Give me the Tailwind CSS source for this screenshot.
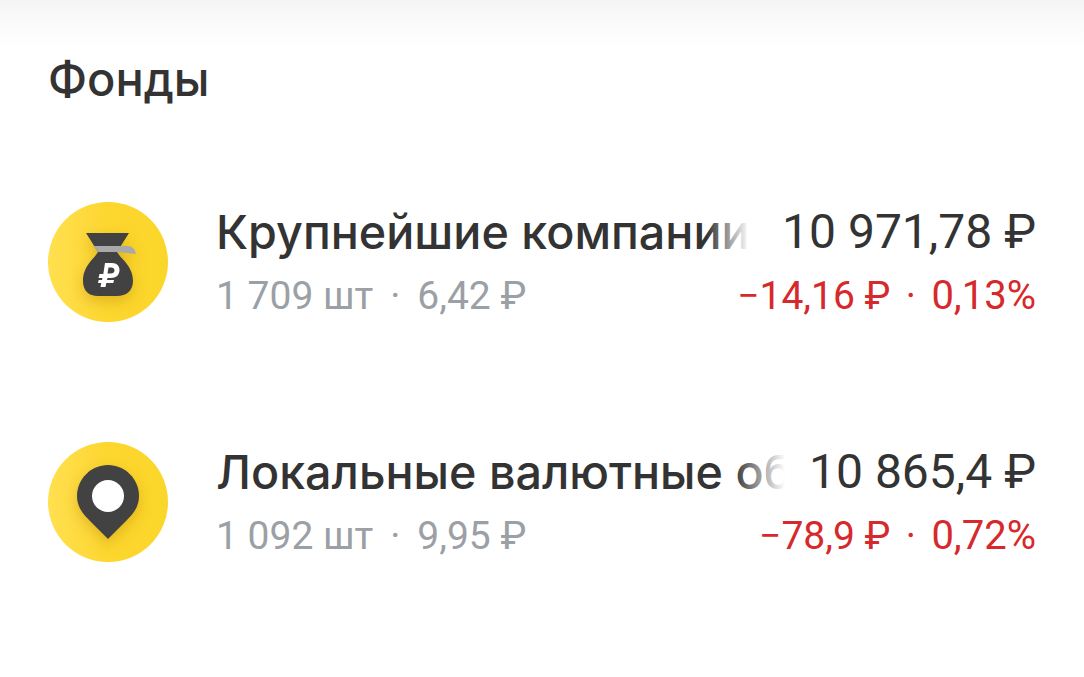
<!DOCTYPE html>
<html lang="ru">
<head>
    <meta charset="UTF-8">
    <meta name="viewport" content="width=device-width, initial-scale=1.0">
    <title>Фонды</title>
    <script src="https://cdn.jsdelivr.net/npm/@tailwindcss/browser@4"></script>
</head>
<body class="bg-white font-['Roboto',sans-serif] text-[#333333] h-[677px] overflow-hidden">
    <!-- top shade -->
    <div class="h-[48px] bg-gradient-to-b from-[#f4f4f4] via-[#fbfbfb] to-white"></div>

    <main class="pl-[48px] pr-[48px]">
        <h1 class="font-['Inter',sans-serif] font-medium text-[47px] leading-[60px] h-[60px] mt-[1px]">Фонды</h1>

        <!-- row 1 -->
        <div class="flex items-center gap-[48px] mt-[93px] h-[120px]">
            <div class="w-[120px] h-[120px] rounded-full bg-gradient-to-r from-[#ffe04f] via-[#fdd62e] to-[#fbd62a] shrink-0">
                <svg width="120" height="120" viewBox="0 0 120 120" class="drop-shadow-[0_5px_7px_rgba(170,120,0,0.35)]">
                    <path d="M38 31H81L69 50C73 57 85 64 85 79C85 89 78 94 69 94H50C41 94 35 89 35 79C35 64 46 57 50 50Z" fill="#424242"/>
                    <path d="M45 44H80C84 44 87 47 88 52L69 50H50C49 48 47 46 45 44Z" fill="#a9a9a9"/>
                    <path d="M57 61H64C69 61 71.500 64 71.500 68C71.500 73 68 76 63 76H59.500L59 78H66L65.300 81H58.300L57.500 85H52.500L53.300 81H50L50.700 78H54L54.500 76H50.500L51.500 72H55.300ZM60.500 65.500L59.500 71.500H62.500C65 71.500 66.500 70.500 66.500 68.500C66.500 66.500 65 65.500 63 65.500Z" fill="#ffffff"/>
                </svg>
            </div>
            <div class="flex-1 min-w-0">
                <div class="flex justify-between items-center h-[60px]">
                    <div class="relative w-[533px] overflow-hidden whitespace-nowrap font-['Inter',sans-serif] font-[450] text-[46.700px] leading-[60px]">
                        Крупнейшие компании
                        <div class="absolute inset-y-0 right-0 w-[42px] bg-gradient-to-r from-white/0 to-white"></div>
                    </div>
                    <div class="shrink-0 text-[48px] leading-[60px]">10 971,78 ₽</div>
                </div>
                <div class="flex justify-between items-center h-[60px] pt-[8px]">
                    <div class="flex text-[39px] text-[#9aa0a6]">
                        <span>1 709 шт</span>
                        <span class="w-[44px] text-center">·</span>
                        <span>6,42 ₽</span>
                    </div>
                    <div class="flex items-baseline text-[39px] text-[#d6292c]">
                        <span>−14,16 ₽</span>
                        <span class="w-[41px] text-center">·</span>
                        <span class="text-[40px]">0,13%</span>
                    </div>
                </div>
            </div>
        </div>

        <!-- row 2 -->
        <div class="flex items-center gap-[48px] mt-[120px] h-[120px]">
            <div class="w-[120px] h-[120px] rounded-full bg-gradient-to-r from-[#ffe04f] via-[#fdd62e] to-[#fbd62a] shrink-0">
                <svg width="120" height="120" viewBox="0 0 120 120" class="drop-shadow-[0_5px_7px_rgba(170,120,0,0.35)]">
                    <path d="M60 23C77 23 91 37 91 54C91 65 85 72 78 79L60 97L42 79C35 72 29 65 29 54C29 37 43 23 60 23Z" fill="#424242"/>
                    <circle cx="60" cy="54" r="16" fill="#ffffff"/>
                </svg>
            </div>
            <div class="flex-1 min-w-0">
                <div class="flex justify-between items-center h-[60px]">
                    <div class="relative w-[569px] overflow-hidden whitespace-nowrap font-['Inter',sans-serif] font-[450] text-[46.700px] leading-[60px]">
                        Локальные валютные облигации
                        <div class="absolute inset-y-0 right-0 w-[52px] bg-gradient-to-r from-white/0 to-white"></div>
                    </div>
                    <div class="shrink-0 text-[48px] leading-[60px]">10 865,4 ₽</div>
                </div>
                <div class="flex justify-between items-center h-[60px] pt-[8px]">
                    <div class="flex text-[39px] text-[#9aa0a6]">
                        <span>1 092 шт</span>
                        <span class="w-[44px] text-center">·</span>
                        <span>9,95 ₽</span>
                    </div>
                    <div class="flex items-baseline text-[39px] text-[#d6292c]">
                        <span>−78,9 ₽</span>
                        <span class="w-[41px] text-center">·</span>
                        <span class="text-[40px]">0,72%</span>
                    </div>
                </div>
            </div>
        </div>
    </main>
</body>
</html>
